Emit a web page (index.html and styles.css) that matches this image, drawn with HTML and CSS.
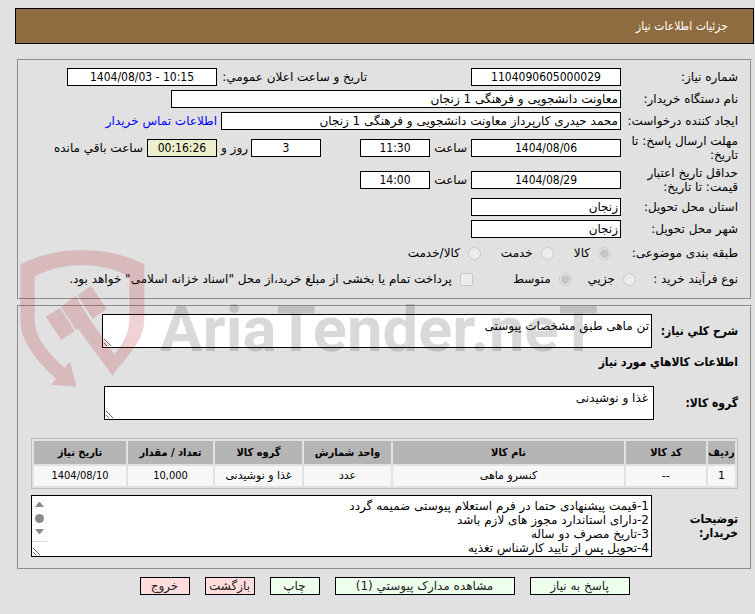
FILE: index.html
```html
<!DOCTYPE html>
<html lang="fa" dir="rtl">
<head>
    <meta charset="utf-8">
    <title>جزئیات اطلاعات نیاز</title>
    <link rel="stylesheet" href="styles.css">
</head>
<body>

<h1 class="title">جزئیات اطلاعات نیاز</h1>

<form>
    <fieldset class="box need">
        <div class="row">
            <label class="name" for="needNo">شماره نیاز:</label>
            <input class="mid" id="needNo" value="1104090605000029" readonly>
            <label class="announce" for="announce">تاریخ و ساعت اعلان عمومي:</label>
            <input class="mid" id="announce" value="1404/08/03 - 10:15" dir="ltr" readonly>
        </div>
        <div class="row">
            <label class="name" for="org">نام دستگاه خریدار:</label>
            <input class="org" id="org" value="معاونت دانشجویی و فرهنگی 1 زنجان" readonly>
        </div>
        <div class="row">
            <label class="name" for="creator">ایجاد کننده درخواست:</label>
            <input class="creator" id="creator" value="محمد حیدری کارپرداز معاونت دانشجویی و فرهنگی 1 زنجان" readonly>
            <a class="contact" href="#contact">اطلاعات تماس خریدار</a>
        </div>
        <div class="row tall">
            <label class="name" for="answerDate">مهلت ارسال پاسخ: تا تاریخ:</label>
            <input class="mid" id="answerDate" value="1404/08/06" readonly>
            <label class="hour" for="answerHour">ساعت</label>
            <input class="short" id="answerHour" value="11:30" readonly>
            <input class="short days" id="days" value="3" aria-label="روز" readonly>
            <label class="and" for="days">روز و</label>
            <input class="short left-time" id="leftTime" value="00:16:26" readonly>
            <label class="remain" for="leftTime">ساعت باقي مانده</label>
        </div>
        <div class="row tall">
            <label class="name" for="validDate">حداقل تاریخ اعتبار قیمت: تا تاریخ:</label>
            <input class="mid" id="validDate" value="1404/08/29" readonly>
            <label class="hour" for="validHour">ساعت</label>
            <input class="short" id="validHour" value="14:00" readonly>
        </div>
        <div class="row">
            <label class="name" for="province">استان محل تحویل:</label>
            <input class="place" id="province" value="زنجان" readonly>
        </div>
        <div class="row">
            <label class="name" for="city">شهر محل تحویل:</label>
            <input class="place" id="city" value="زنجان" readonly>
        </div>
        <div class="row options">
            <span class="name">طبقه بندی موضوعی:</span>
            <div class="choices kind">
                <label><input type="radio" name="kind" checked disabled>کالا</label>
                <label><input type="radio" name="kind" disabled>خدمت</label>
                <label><input type="radio" name="kind" disabled>کالا/خدمت</label>
            </div>
        </div>
        <div class="row options">
            <span class="name process">نوع فرآیند خرید :</span>
            <div class="choices">
                <label><input type="radio" name="process" disabled>جزیي</label>
                <label><input type="radio" name="process" checked disabled>متوسط</label>
                <label class="treasury"><input type="checkbox" disabled>پرداخت تمام یا بخشی از مبلغ خرید،از محل "اسناد خزانه اسلامی" خواهد بود.</label>
            </div>
        </div>
    </fieldset>

    <fieldset class="box goods">
        <div class="field">
            <label for="summary">شرح کلي نیاز:</label>
            <textarea id="summary" readonly>تن ماهی طبق مشخصات پیوستی</textarea>
        </div>
        <h2>اطلاعات کالاهاي مورد نیاز</h2>
        <div class="field group">
            <label for="group">گروه کالا:</label>
            <textarea id="group" readonly>غذا و نوشیدنی</textarea>
        </div>

        <table>
            <colgroup>
                <col class="c-row"><col class="c-code"><col><col class="c-unit"><col class="c-group"><col class="c-qty"><col class="c-date">
            </colgroup>
            <thead>
            <tr>
                <th>ردیف</th>
                <th>کد کالا</th>
                <th>نام کالا</th>
                <th>واحد شمارش</th>
                <th>گروه کالا</th>
                <th>تعداد / مقدار</th>
                <th>تاریخ نیاز</th>
            </tr>
            </thead>
            <tbody>
            <tr>
                <td>1</td>
                <td>--</td>
                <td>کنسرو ماهی</td>
                <td>عدد</td>
                <td>غذا و نوشیدنی</td>
                <td class="num">10,000</td>
                <td class="num">1404/08/10</td>
            </tr>
            </tbody>
        </table>

        <div class="field notes">
            <label for="notes">توضیحات خریدار:</label>
            <textarea id="notes" readonly>1-قیمت پیشنهادی حتما در فرم استعلام پیوستی ضمیمه گردد
2-دارای استاندارد مجوز های لازم باشد
3-تاریخ مصرف دو ساله
4-تحویل پس از تایید کارشناس تغذیه
</textarea>
            <svg class="scroll" viewBox="0 0 15 46" aria-hidden="true">
                <path class="track" d="M0 0H15V45H0Z"/>
                <path class="edge" d="M0 45H15V46H0Z"/>
                <path d="M3 11L7 6H8L12 11ZM3 33L7 38H8L12 33Z"/>
                <circle cx="7.5" cy="22.5" r="4.5"/>
            </svg>
        </div>
    </fieldset>

    <div class="actions">
        <button type="button" class="reply">پاسخ به نیاز</button>
        <button type="button" class="docs">مشاهده مدارک پیوستي (1)</button>
        <button type="button">چاپ</button>
        <button type="button" class="leave">بازگشت</button>
        <button type="button" class="leave">خروج</button>
    </div>
</form>

<svg class="watermark" viewBox="0 0 1920 600" direction="ltr" aria-hidden="true">
    <g class="shield">
        <path d="M61 103Q145 60 245 60Q350 60 433 103V265C432 330 402 352 338 437L235 298H226L183 230L227 198L272 272L343 373C372 335 388 310 388 265V138Q245 72 104 138V265C105 325 140 362 193 414L210 395L230 470L152 464L168 447C110 390 61 340 61 265Z"/>
        <path d="M137 260L180 233L224 302L184 330ZM233 196L273 168L320 237L278 266Z"/>
    </g>
    <text x="480" y="364">AriaTender.neT</text>
</svg>

</body>
</html>
```
FILE: styles.css
```css
* {
    box-sizing: border-box;
}
body {
    position: relative;
    margin: 8px 1px 0 15px;
    background: #e1e1e1;
    color: #000;
    font: 12px/14px "DejaVu Sans", sans-serif;
}
input, textarea, button {
    margin: 0;
    font: inherit;
    color: inherit;
    border: 1px solid #000;
    border-radius: 0;
}

.title {
    margin: 0 0 15px;
    padding: 10px 25px;
    border: 1px solid #000;
    background: #8f6c40;
    color: #fff;
    font: 12px/14px "DejaVu Sans Condensed", sans-serif;
}

.box {
    margin: 0 2px 5px 2px;
    padding: 5px 12px 6px;
    border: 2px groove #e1e1e1;
}

/* need details */
.row {
    display: flex;
    align-items: center;
    height: 22px;
}
.tall {
    height: 32px;
}
.options {
    height: 26px;
}
.name {
    flex: 0 0 117px;
    padding-left: 4px;
}
.row > input {
    height: 18px;
    padding: 0 2px;
    background: #fff;
}
.row > .mid {
    width: 150px;
    font-family: "DejaVu Sans Condensed", sans-serif;
    text-align: center;
}
.row > .short {
    width: 70px;
    font-family: "DejaVu Sans Condensed", sans-serif;
    text-align: center;
}
.org {
    width: 450px;
}
.creator {
    width: 400px;
}
.place {
    width: 150px;
}
.announce {
    width: 154px;
    margin-right: 100px;
    padding-right: 4px;
    white-space: nowrap;
}
.contact {
    margin-right: 4px;
    color: #00f;
    text-decoration: none;
}
.hour {
    width: 41px;
    padding-right: 4px;
}
.days {
    margin-right: 39px;
}
.and {
    width: 34px;
    padding-right: 3px;
    white-space: nowrap;
}
.row > .left-time {
    background: #eeeecc;
}
.remain {
    padding-right: 4px;
}
.choices {
    display: flex;
    gap: 16px;
    white-space: nowrap;
}
.kind {
    gap: 20px;
    padding-right: 10px;
}
.process {
    flex-basis: 102px;
}
.choices label {
    display: flex;
    align-items: center;
    gap: 8px;
}
.choices input {
    appearance: none;
    width: 13px;
    height: 13px;
    border: 1px solid #c9c9c9;
    background: #ececec;
}
.choices input[type="radio"] {
    border-radius: 50%;
}
.choices input[type="checkbox"] {
    border-radius: 2px;
}
.choices input:checked {
    background: radial-gradient(#c6c6c6 4px, #ececec 5px);
}
.treasury {
    margin-right: 24px;
}

/* goods */
.goods {
    padding: 7px 12px 11px;
}
.field {
    display: flex;
    align-items: center;
    position: relative;
}
.field label {
    flex: 0 0 86px;
    font-family: "DejaVu Sans Condensed", sans-serif;
    font-weight: bold;
}
.field textarea {
    display: block;
    flex: 0 0 550px;
    height: 34px;
    padding: 4px 2px;
    background: #fff;
}
h2 {
    margin: 7px 0 17px;
    font: bold 12px/14px "DejaVu Sans Condensed", sans-serif;
}
.group label {
    flex-basis: 84px;
}
.group textarea {
    padding: 4px 5px;
}
table {
    width: 100%;
    margin: 18px 0 6px;
    border: 1px solid #c0c0c0;
    border-spacing: 2px;
    table-layout: fixed;
    font-size: 11px;
    text-align: center;
}
th, td {
    padding: 0;
    white-space: nowrap;
}
th {
    height: 23px;
    background: #b5b5b5;
    font-family: "DejaVu Sans Condensed", sans-serif;
}
td {
    height: 20px;
    background: #f7f7f7;
}
.num {
    font-family: "DejaVu Sans Condensed", sans-serif;
}
.c-row {
    width: 27px;
}
.c-code {
    width: 80px;
}
.c-unit, .c-group {
    width: 87px;
}
.c-qty {
    width: 85px;
}
.c-date {
    width: 92px;
}
.notes label {
    padding-left: 16px;
}
.notes textarea {
    flex: 1;
    height: 62px;
    padding-top: 3px;
}
.scroll {
    position: absolute;
    left: 1px;
    top: 1px;
    width: 15px;
    height: 46px;
    fill: #8b8b8b;
}
.track {
    fill: #fcfcfc;
}
.edge {
    fill: #d9d9d9;
}

.actions {
    display: flex;
    justify-content: center;
    gap: 15px;
    padding-top: 2px;
}
button {
    width: 50px;
    height: 18px;
    padding: 0;
    background: #eeffee;
    color: #222;
    white-space: nowrap;
}
.reply {
    width: 100px;
}
.docs {
    width: 180px;
}
.leave {
    background: #ffdddd;
}

/* watermark over the whole form */
.watermark {
    position: absolute;
    left: -15px;
    top: 222px;
    width: 640px;
    height: 200px;
    pointer-events: none;
    font: bold 190px Roboto, sans-serif;
    fill: #000;
    fill-opacity: 0.15;
}
.shield {
    fill: #b4202a;
    fill-opacity: 0.2;
}
```
